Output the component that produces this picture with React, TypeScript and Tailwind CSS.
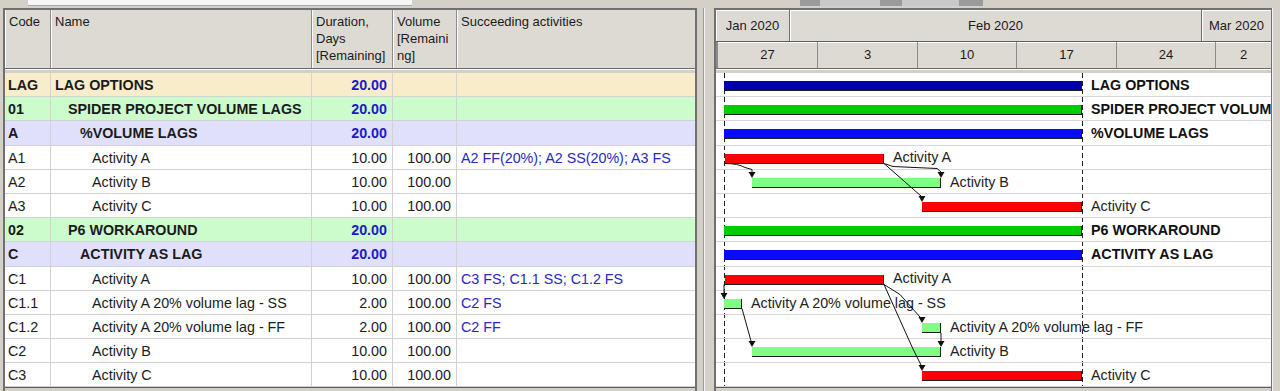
import React from "react";

type Kind = "root" | "phase" | "group" | "task";

interface Row {
  code: string;
  name: string;
  level: number;
  kind: Kind;
  dur: string;
  vol?: string;
  succ?: string;
  start: number;
  end: number;
  color: string;
}

const RED = "bg-[#ff0000]";
const LIGHT = "bg-[#80ff80]";

const rows: Row[] = [
  { code: "LAG", name: "LAG OPTIONS", level: 0, kind: "root", dur: "20.00", start: 724, end: 1082, color: "bg-[#0000a8]" },
  { code: "01", name: "SPIDER PROJECT VOLUME LAGS", level: 1, kind: "phase", dur: "20.00", start: 724, end: 1082, color: "bg-[#00cc00]" },
  { code: "A", name: "%VOLUME LAGS", level: 2, kind: "group", dur: "20.00", start: 724, end: 1082, color: "bg-[#0a0aff]" },
  { code: "A1", name: "Activity A", level: 3, kind: "task", dur: "10.00", vol: "100.00", succ: "A2 FF(20%); A2 SS(20%); A3 FS", start: 725, end: 884, color: RED },
  { code: "A2", name: "Activity B", level: 3, kind: "task", dur: "10.00", vol: "100.00", start: 752, end: 941, color: LIGHT },
  { code: "A3", name: "Activity C", level: 3, kind: "task", dur: "10.00", vol: "100.00", start: 922, end: 1082, color: RED },
  { code: "02", name: "P6 WORKAROUND", level: 1, kind: "phase", dur: "20.00", start: 724, end: 1082, color: "bg-[#00cc00]" },
  { code: "C", name: "ACTIVITY AS LAG", level: 2, kind: "group", dur: "20.00", start: 724, end: 1082, color: "bg-[#0a0aff]" },
  { code: "C1", name: "Activity A", level: 3, kind: "task", dur: "10.00", vol: "100.00", succ: "C3 FS; C1.1 SS; C1.2 FS", start: 725, end: 884, color: RED },
  { code: "C1.1", name: "Activity A 20% volume lag - SS", level: 3, kind: "task", dur: "2.00", vol: "100.00", succ: "C2 FS", start: 724, end: 742, color: LIGHT },
  { code: "C1.2", name: "Activity A 20% volume lag - FF", level: 3, kind: "task", dur: "2.00", vol: "100.00", succ: "C2 FF", start: 922, end: 941, color: LIGHT },
  { code: "C2", name: "Activity B", level: 3, kind: "task", dur: "10.00", vol: "100.00", start: 752, end: 941, color: LIGHT },
  { code: "C3", name: "Activity C", level: 3, kind: "task", dur: "10.00", vol: "100.00", start: 922, end: 1082, color: RED },
];

const rowBg: Record<Kind, string> = {
  root: "bg-[#f9ecca]",
  phase: "bg-[#ccfccc]",
  group: "bg-[#e0e0fc]",
  task: "bg-white",
};

const indent = ["pl-[4px]", "pl-[17px]", "pl-[29px]", "pl-[41px]"];

const cols = "grid grid-cols-[46px_261px_81px_64px_238px]";

// gantt origin in page coordinates
const X0 = 716;
const Y0 = 73;

function Arrow({ x, y }: { x: number; y: number }) {
  return <polygon points={`${x - 3.5},${y - 6} ${x + 3.5},${y - 6} ${x},${y}`} fill="#111" />;
}

function HeadCell({ children, last }: { children: React.ReactNode; last?: boolean }) {
  return (
    <div className={`px-[4px] pt-[3px] shadow-[inset_1px_0_0_#ffffff] ${last ? "" : "border-r border-[#8c8c8c]"}`}>
      {children}
    </div>
  );
}

export default function App() {
  return (
    <div className="w-[1280px] h-[391px] overflow-hidden bg-[#d4d0c8] font-['Liberation_Sans',Arial,sans-serif] text-[#1b1b1b]">
      {/* top strip */}
      <div className="h-[8px] flex">
        <div className="ml-[28px] w-[384px] h-[6px] bg-[#f6f6f6] border-b border-[#a8a8a8]" />
        <div className="ml-[388px] w-[20px] h-[6px] bg-[#9a9a9a]" />
        <div className="w-[60px] h-[6px] bg-[#c8c8c8]" />
        <div className="w-[22px] h-[6px] bg-[#9a9a9a]" />
        <div className="w-[57px] h-[6px] bg-[#c8c8c8]" />
        <div className="w-[24px] h-[6px] bg-[#9a9a9a]" />
      </div>

      <div className="flex h-[383px]">
        {/* left table */}
        <div className="w-[697px] pl-[3px] flex flex-col">
          <div className="flex-1 border-l-2 border-t-2 border-r-2 border-[#707070] flex flex-col">
            <div className={`${cols} h-[58px] bg-[#dddad3] text-[13px] leading-[17px]`}>
              <HeadCell>Code</HeadCell>
              <HeadCell>Name</HeadCell>
              <HeadCell>
                Duration,
                <br />
                Days
                <br />
                [Remaining]
              </HeadCell>
              <HeadCell>
                Volume
                <br />
                [Remaini
                <br />
                ng]
              </HeadCell>
              <HeadCell last>Succeeding activities</HeadCell>
            </div>
            <div className="h-[5px] border-t border-[#6a6a6a] bg-[#d4d0c8] shadow-[inset_0_1px_0_#ffffff]" />
            <div className="text-[14.3px]">
              {rows.map((r) => {
                const bold = r.kind !== "task";
                return (
                  <div key={r.code} className={`${cols} h-[24.2px] border-b border-[#d2d2d2] ${rowBg[r.kind]}`}>
                    <div className={`flex items-center pt-[2px] pl-[3px] border-r border-[#d2d2d2] ${bold ? "font-bold" : ""}`}>{r.code}</div>
                    <div className={`flex items-center pt-[2px] whitespace-nowrap overflow-hidden border-r border-[#d2d2d2] ${indent[r.level]} ${bold ? "font-bold" : ""}`}>
                      {r.name}
                    </div>
                    <div className={`flex items-center justify-end pt-[2px] pr-[5px] border-r border-[#d2d2d2] ${bold ? "font-bold text-[#1a1ac8]" : ""}`}>
                      {r.dur}
                    </div>
                    <div className="flex items-center justify-end pt-[2px] pr-[5px] border-r border-[#d2d2d2]">{r.vol}</div>
                    <div className="flex items-center pt-[2px] pl-[4px] whitespace-nowrap overflow-hidden text-[#2828c4]">{r.succ}</div>
                  </div>
                );
              })}
            </div>
            <div className="border-t border-[#5a5a5a]" />
          </div>
        </div>

        {/* splitter */}
        <div className="w-[17px] flex pl-[6px]">
          <div className="w-[2px] border-l border-[#9a9a9a] border-r border-r-[#f4f4f4]" />
        </div>

        {/* gantt */}
        <div className="w-[566px] flex">
          <div className="w-[558px] border-l-2 border-t-2 border-r border-[#707070] flex flex-col">
            <div className="h-[32px] flex bg-[#dddad3] text-[13px] border-b border-[#5e5e5e]">
              <div className="w-[74px] flex items-center justify-center border-r border-[#6e6e6e] shadow-[inset_1px_1px_0_#ffffff]">Jan 2020</div>
              <div className="w-[412px] flex items-center justify-center border-r border-[#6e6e6e] shadow-[inset_1px_1px_0_#ffffff]">Feb 2020</div>
              <div className="flex-1 flex items-center justify-center shadow-[inset_1px_1px_0_#ffffff]">Mar 2020</div>
            </div>
            <div className="h-[26px] flex bg-[#dddad3] text-[13px] shadow-[inset_0_1px_0_#ffffff]">
              <div className="w-[102px] flex items-center justify-center border-l-2 border-[#8c8c8c] border-r">27</div>
              <div className="w-[100px] flex items-center justify-center border-r border-[#8c8c8c]">3</div>
              <div className="w-[99px] flex items-center justify-center border-r border-[#8c8c8c]">10</div>
              <div className="w-[100px] flex items-center justify-center border-r border-[#8c8c8c]">17</div>
              <div className="w-[99px] flex items-center justify-center border-r border-[#8c8c8c]">24</div>
              <div className="flex-1 flex items-center justify-center">2</div>
            </div>
            <div className="h-[5px] border-t border-[#6a6a6a] bg-[#d4d0c8] shadow-[inset_0_1px_0_#ffffff]" />
            <div className="relative bg-white overflow-hidden text-[14.3px]">
              <svg className="absolute left-0 top-0" width="555" height="320">
                <g transform={`translate(${-X0},${-Y0})`} stroke="#222" strokeWidth="1" strokeDasharray="5 3">
                  <line x1="724.5" y1={Y0} x2="724.5" y2="392" />
                  <line x1="1082.5" y1={Y0} x2="1082.5" y2="392" />
                </g>
              </svg>
              {rows.map((r) => {
                const bold = r.kind !== "task";
                return (
                  <div key={r.code} className="relative h-[24.2px] border-b border-[#d6d6d6]">
                    <div
                      className={`absolute top-[8px] h-[10px] border-b border-r border-[#1e1e1e] ${r.color}`}
                      style={{ left: r.start - X0, width: r.end - r.start }}
                    />
                    <div
                      className={`absolute top-0 pt-[2px] h-full flex items-center whitespace-nowrap ${bold ? "font-bold text-[#111]" : "text-[#222]"}`}
                      style={{ left: r.end - X0 + 9 }}
                    >
                      {r.name}
                    </div>
                  </div>
                );
              })}
              <svg className="absolute left-0 top-0" width="555" height="320">
                <g transform={`translate(${-X0},${-Y0})`} stroke="#111" strokeWidth="1" fill="none">
                  <path d="M725,163.5 Q738,163.5 745,167.5 L752,169.5 L752,172" />
                  <path d="M884,163.5 L893,166.5 L937,168.5 L941,172" />
                  <path d="M884,163.5 L921,196" />
                  <path d="M724,284.5 L724,293" />
                  <path d="M742,308.5 L751,341" />
                  <path d="M884,284.5 L900,294.5 L920,317" />
                  <path d="M884,284.5 L913,349 L921,365" />
                  <path d="M941,333 L941,341" />
                </g>
                <g transform={`translate(${-X0},${-Y0})`}>
                  <Arrow x={752} y={178} />
                  <Arrow x={941} y={178} />
                  <Arrow x={922} y={202} />
                  <Arrow x={724} y={299} />
                  <Arrow x={752} y={347} />
                  <Arrow x={922} y={323} />
                  <Arrow x={922} y={371} />
                  <Arrow x={941} y={347} />
                </g>
              </svg>
            </div>
            <div className="border-t border-[#5a5a5a]" />
          </div>
          <div className="flex-1 border-l border-[#f4f4f4] bg-[#d4d0c8]" />
        </div>
      </div>
    </div>
  );
}
